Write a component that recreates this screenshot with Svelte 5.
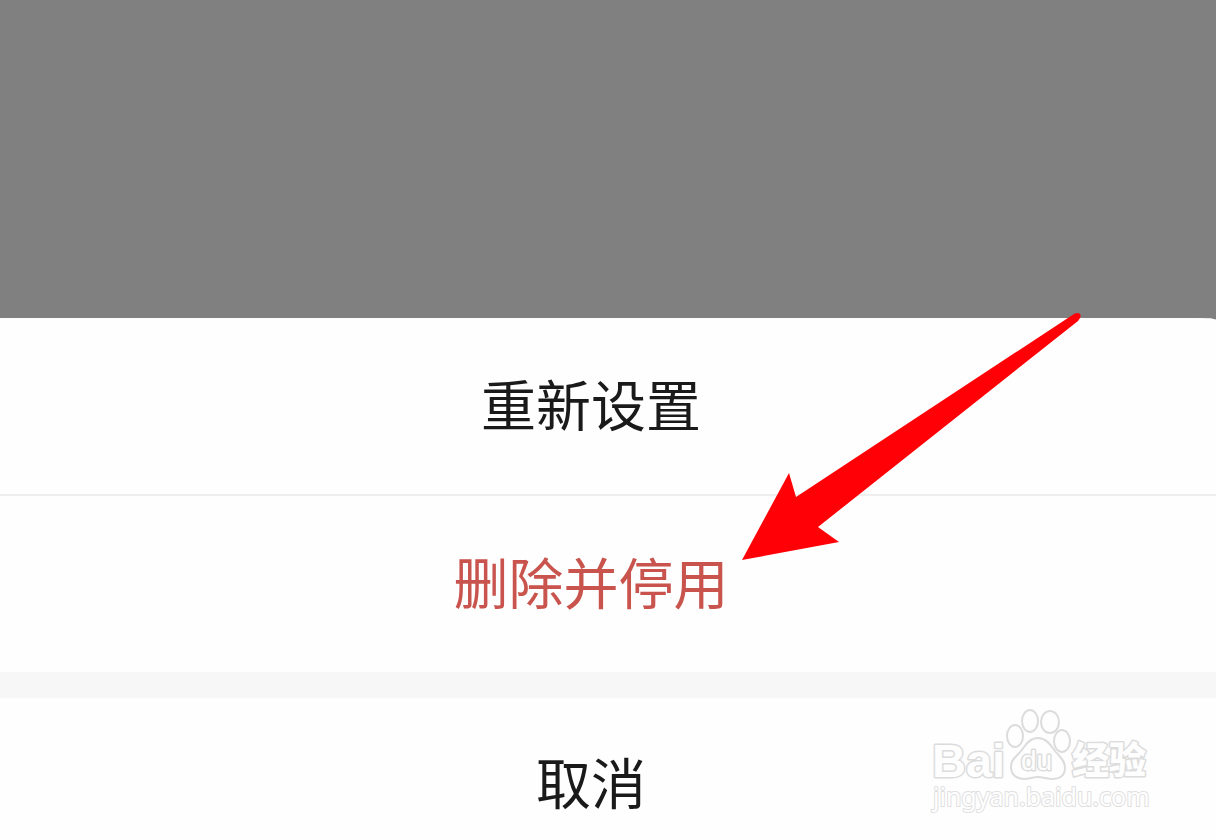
<script lang="ts">
   type Action = { label: string; tone?: "danger" | "cancel" };

   const actions: Action[] = [{ label: "重新设置" }, { label: "删除并停用", tone: "danger" }];
   const cancel: Action = { label: "取消", tone: "cancel" };

   let open = $state(true);

   const close = () => (open = false);
</script>

{#snippet row(a: Action)}
   <button class="row" class:danger={a.tone === "danger"} class:cancel={a.tone === "cancel"} onclick={close}>
      {a.label}
   </button>
{/snippet}

<main class="screen">
   {#if open}
      <div class="sheet" role="dialog" aria-label="重新设置">
         <div class="group">
            {#each actions as a}
               {@render row(a)}
            {/each}
         </div>
         {@render row(cancel)}

         <svg class="arrow" viewBox="0 0 340 248" aria-hidden="true">
            <path d="M0 247 47 160 54 184 332 1Q336-1 338 1T336 8L76 214 97 229Z" />
         </svg>

         <svg class="watermark" viewBox="0 0 230 112" role="img" aria-label="Baidu 经验">
            <text class="latin" x="6" y="69" font-size="47">Bai</text>
            <g class="paw">
               <ellipse cx="104" cy="13" rx="8" ry="11" />
               <ellipse cx="124" cy="14" rx="9" ry="11" />
               <ellipse cx="89" cy="28" rx="8" ry="11" />
               <ellipse cx="136" cy="33" rx="8" ry="11" />
               <path
                  d="M112 30C121 30 125 38 129 43C133 48 139 52 139 60C139 68 133 71 126 71C121 71 117 69 112 69S103 71 98 71C91 71 85 67 85 59C85 51 91 48 95 43C99 38 103 30 112 30Z"
               />
            </g>
            <text class="du" x="95" y="62" font-size="28">du</text>
            <text class="hans" x="146" y="66" font-size="37">经验</text>
            <text class="site" x="7" y="98" font-size="25">jingyan.baidu.com</text>
         </svg>
      </div>
   {/if}
</main>

<style>
   :global(body) {
      margin: 0;
      background: #808080;
   }

   .screen {
      min-height: 100vh;
      display: flex;
      flex-direction: column;
      justify-content: flex-end;
      font-family: "Noto Sans CJK SC", "Noto Sans", sans-serif;
   }

   .sheet {
      position: relative;
      display: flex;
      flex-direction: column;
      gap: 26px;
      background: #f7f7f7;
      border-top-right-radius: 24px 2px;
   }

   .group {
      display: flex;
      flex-direction: column;
      gap: 2px;
      background: #efefef;
      border-top-right-radius: 24px 2px;
      overflow: hidden;
   }

   .row {
      width: 100%;
      margin: 0;
      padding: 44px 34px 52px 0;
      border: 0;
      background: #fefefe;
      color: #1a1a1a;
      font-family: inherit;
      font-size: 55px;
      line-height: 80px;
      text-align: center;
      cursor: pointer;
   }

   .row.danger {
      color: #c9544e;
   }

   .row.cancel {
      padding-top: 42px;
      padding-bottom: 20px;
   }

   /* pointer drawn over the two rows */
   .arrow {
      position: absolute;
      top: -5px;
      right: 134px;
      width: 340px;
      height: 248px;
      overflow: visible;
      fill: #ff0006;
      pointer-events: none;
   }

   .watermark {
      position: absolute;
      right: 60px;
      bottom: 20px;
      width: 230px;
      height: 112px;
      overflow: visible;
      pointer-events: none;
   }

   .watermark text,
   .paw {
      fill: #fefefe;
      stroke: #dcdcdc;
      stroke-width: 2;
      stroke-linejoin: round;
   }

   .watermark text {
      paint-order: stroke;
      stroke-width: 3;
   }

   .latin,
   .du {
      font-family: "Liberation Sans", Arial, sans-serif;
      font-weight: 700;
   }

   .watermark .du {
      font-weight: 400;
   }

   .hans {
      font-weight: 900;
   }

   .watermark .site {
      font-family: "Noto Sans", sans-serif;
      stroke: #e0e0e0;
      stroke-width: 2;
   }
</style>
